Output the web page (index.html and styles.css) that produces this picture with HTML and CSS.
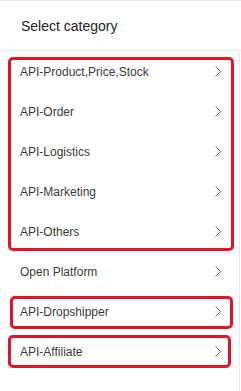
FILE: index.html
```html
<!DOCTYPE html>
<html lang="en">
<head>
  <meta charset="UTF-8" />
  <meta name="viewport" content="width=device-width, initial-scale=1.0" />
  <title>Select category</title>
  <link rel="stylesheet" href="styles.css">
</head>
<body>
  <div class="panel">
    <header class="panel-head">Select category</header>

    <div class="cat-list">
      <div class="group mark mark-big">
        <div class="row"><span>API-Product,Price,Stock</span><svg class="chev" viewBox="0 0 6 11"><polyline points="0.5,0.5 5.5,5.5 0.5,10.5"/></svg></div>
        <div class="row"><span>API-Order</span><svg class="chev" viewBox="0 0 6 11"><polyline points="0.5,0.5 5.5,5.5 0.5,10.5"/></svg></div>
        <div class="row"><span>API-Logistics</span><svg class="chev" viewBox="0 0 6 11"><polyline points="0.5,0.5 5.5,5.5 0.5,10.5"/></svg></div>
        <div class="row"><span>API-Marketing</span><svg class="chev" viewBox="0 0 6 11"><polyline points="0.5,0.5 5.5,5.5 0.5,10.5"/></svg></div>
        <div class="row"><span>API-Others</span><svg class="chev" viewBox="0 0 6 11"><polyline points="0.5,0.5 5.5,5.5 0.5,10.5"/></svg></div>
      </div>
      <div class="row"><span>Open Platform</span><svg class="chev" viewBox="0 0 6 11"><polyline points="0.5,0.5 5.5,5.5 0.5,10.5"/></svg></div>
      <div class="row mark mark-drop"><span>API-Dropshipper</span><svg class="chev" viewBox="0 0 6 11"><polyline points="0.5,0.5 5.5,5.5 0.5,10.5"/></svg></div>
      <div class="row mark mark-aff"><span>API-Affiliate</span><svg class="chev" viewBox="0 0 6 11"><polyline points="0.5,0.5 5.5,5.5 0.5,10.5"/></svg></div>
    </div>
  </div>
</body>
</html>
```

FILE: styles.css
```css
:root{
  --text:#3a3a3a;
  --line:#e8e8e8;
  --chev:#666;
  --mark:#e3142a;
}
*{box-sizing:border-box;margin:0;padding:0}
body{font-family:'Liberation Sans',Arial,sans-serif;background:#fff;color:var(--text)}

.panel{border-top:1px solid var(--line);height:391px}
.panel-head{height:50px;padding:0 21px;display:flex;align-items:center;font-size:14px;color:#222;border-bottom:1px solid var(--line)}

.cat-list{width:240px;border-right:1px solid var(--line);height:340px}
.row{height:40px;display:flex;align-items:center;justify-content:space-between;padding:0 18px 0 20px;font-size:12px;color:var(--text)}
.row span{padding-top:1px}
.chev{width:6px;height:11px;fill:none;stroke:var(--chev);stroke-width:1}

/* red annotation frames */
.mark{position:relative}
.mark::after{content:'';position:absolute;border:3px solid var(--mark);border-radius:5px}
.mark-big::after{top:6px;bottom:0;left:8px;right:5px}
.mark-drop::after{top:5px;bottom:2px;left:10px;right:6px}
.mark-aff::after{top:4px;bottom:3px;left:8px;right:8px}
```
